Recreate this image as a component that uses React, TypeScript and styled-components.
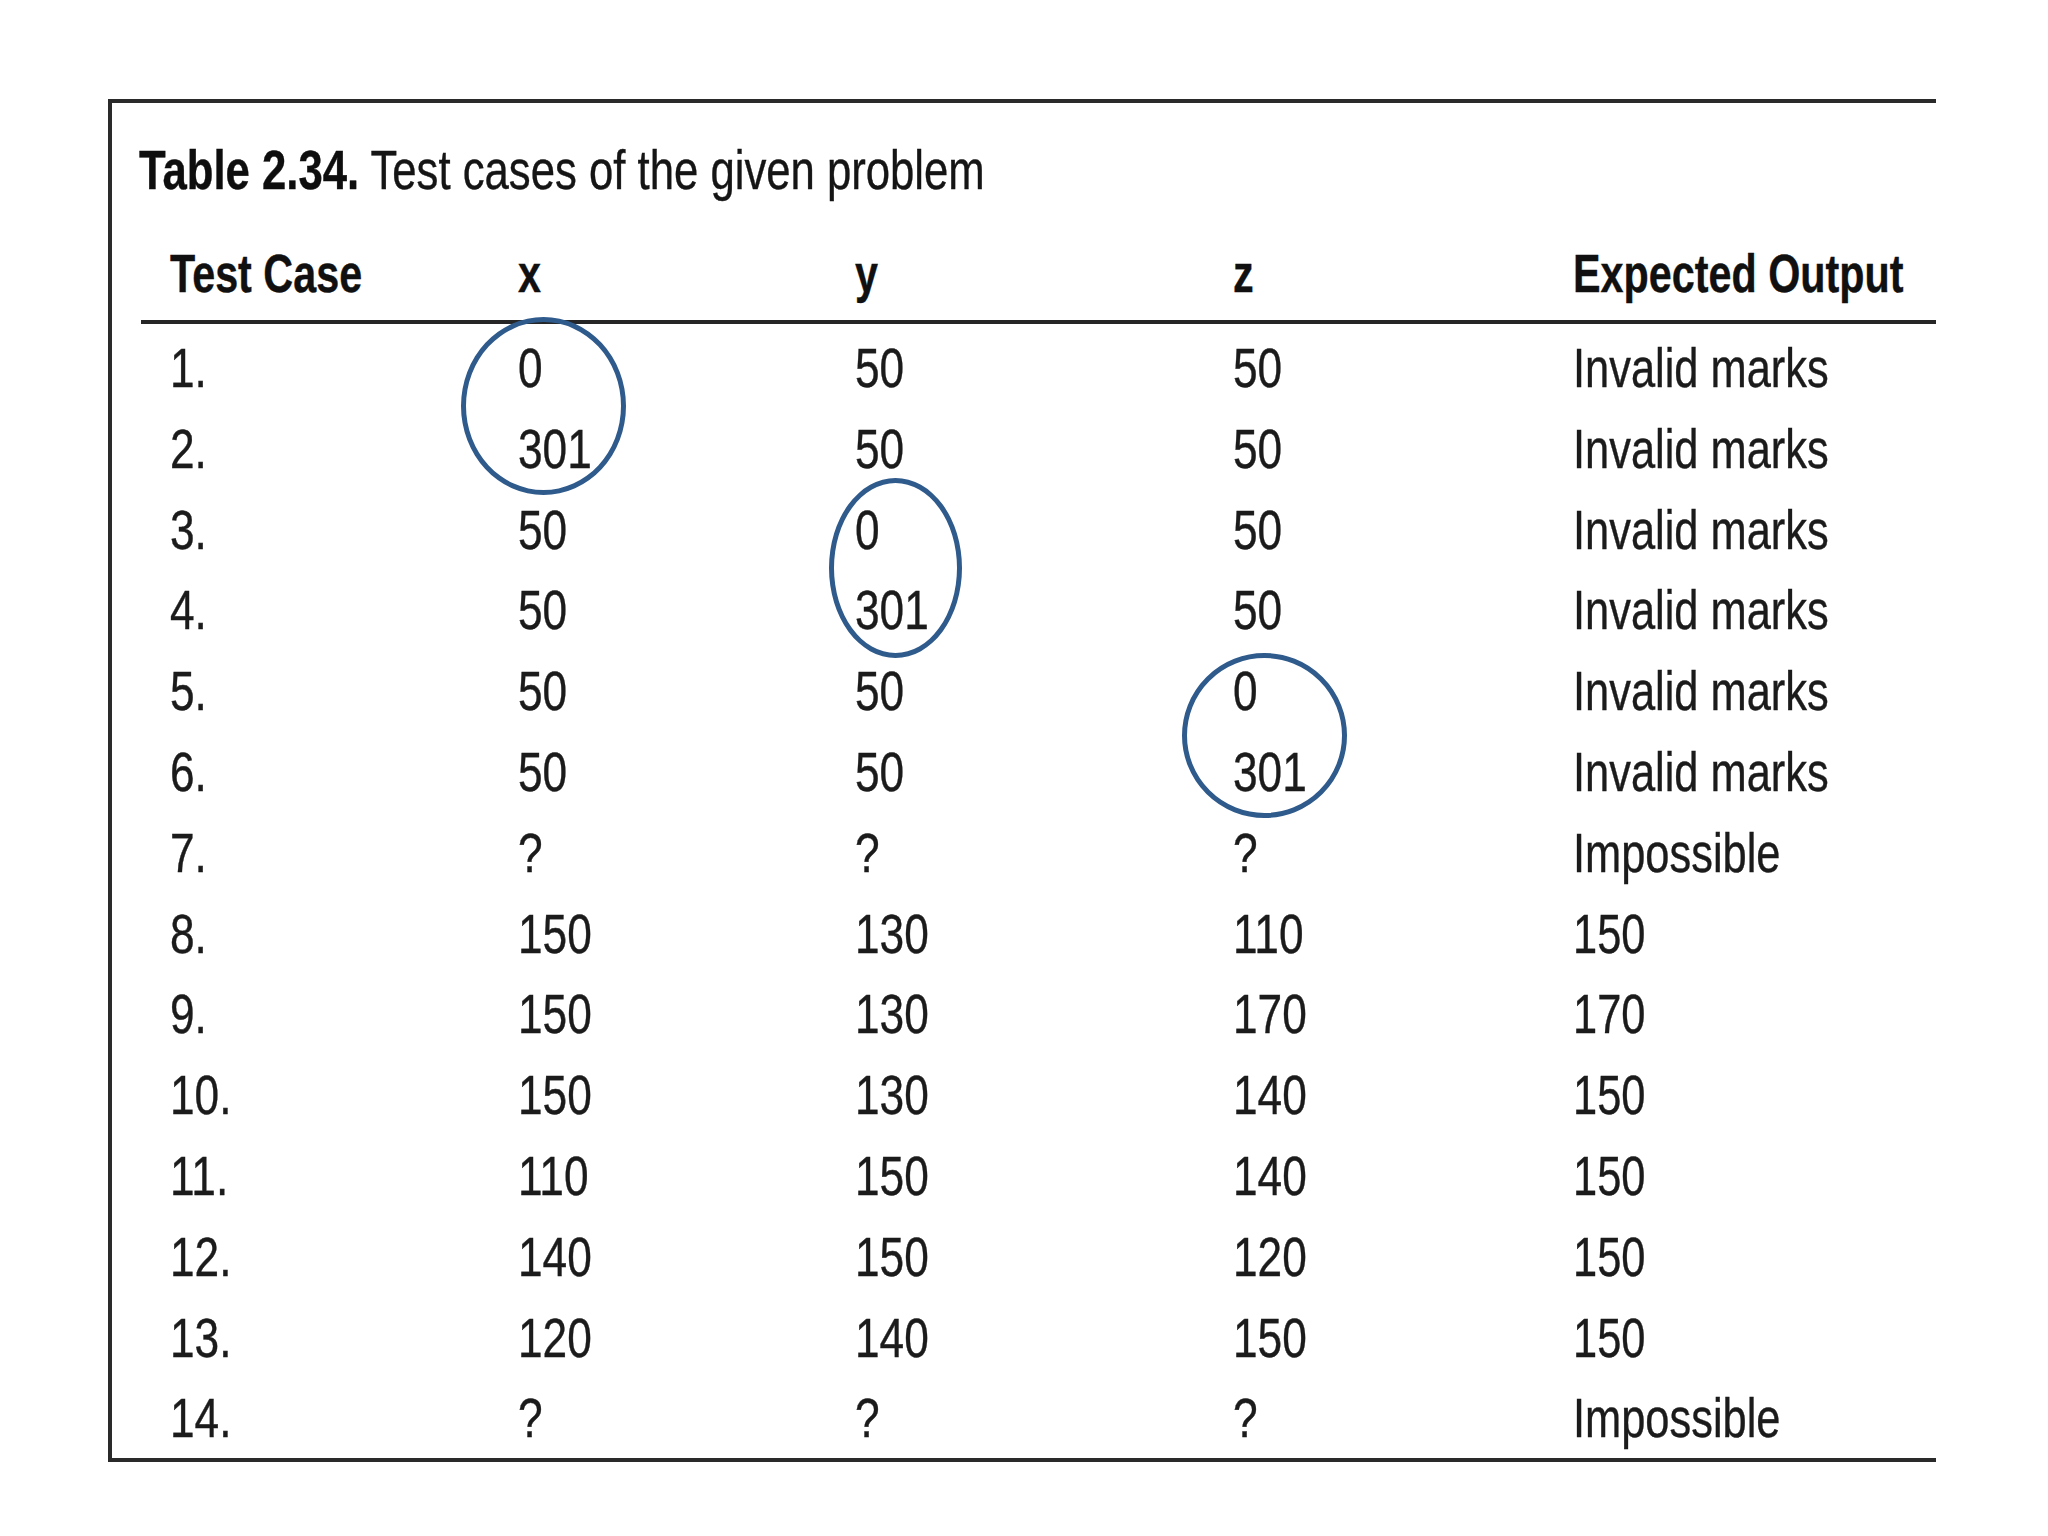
import React from "react";
import styled, { createGlobalStyle } from "styled-components";

const Global = createGlobalStyle`
  html, body { margin: 0; padding: 0; background: #ffffff; }
  body { width: 2048px; height: 1536px; overflow: hidden; }
`;

const FONT = `"Liberation Sans", Arial, sans-serif`;

const COLS = "348px 337px 378px 340px 1fr";

const Frame = styled.section`
  position: relative;
  box-sizing: border-box;
  margin: 99px 0 0 108px;
  width: 1828px;
  border-top: 4.5px solid #2a2a2a;
  border-left: 4px solid #2a2a2a;
  border-bottom: 4.5px solid #2a2a2a;
  padding: 38.6px 0 12px 0;
  font-family: ${FONT};
  color: #1b1b1b;
  -webkit-text-stroke: 0.4px currentColor;
`;

const Caption = styled.div`
  padding-left: 27px;
  font-size: 56px;
  line-height: 56px;
  white-space: nowrap;
  color: #151515;
`;

const Narrow = styled.span<{ $k: number }>`
  display: inline-block;
  transform: scaleX(${(p) => p.$k});
  transform-origin: 0 50%;
  white-space: nowrap;
`;

const CaptionLabel = styled.span`
  font-weight: 700;
  color: #0e0e0e;
`;

const Table = styled.div`
  margin: 48.7px 0 0 29px;
`;

const HeadRow = styled.div`
  display: grid;
  grid-template-columns: ${COLS};
  padding: 0 0 19.7px 29px;
  border-bottom: 4.5px solid #262626;
  font-size: 54px;
  line-height: 54px;
  font-weight: 700;
  color: #101010;
`;

const Body = styled.div`
  display: flex;
  flex-direction: column;
  gap: 24.8px;
  padding-top: 16.1px;
  font-size: 56px;
  line-height: 56px;
`;

const Row = styled.div`
  display: grid;
  grid-template-columns: ${COLS};
  padding-left: 29px;
`;

const Cell = styled.div`
  white-space: nowrap;
`;

const Ring = styled.div<{ $x: number; $y: number; $w: number; $h: number }>`
  position: absolute;
  box-sizing: border-box;
  left: ${(p) => p.$x}px;
  top: ${(p) => p.$y}px;
  width: ${(p) => p.$w}px;
  height: ${(p) => p.$h}px;
  border: 5px solid #2f5a8c;
  border-radius: 50%;
  pointer-events: none;
`;

const rows: [string, string, string, string, string][] = [
  ["1.", "0", "50", "50", "Invalid marks"],
  ["2.", "301", "50", "50", "Invalid marks"],
  ["3.", "50", "0", "50", "Invalid marks"],
  ["4.", "50", "301", "50", "Invalid marks"],
  ["5.", "50", "50", "0", "Invalid marks"],
  ["6.", "50", "50", "301", "Invalid marks"],
  ["7.", "?", "?", "?", "Impossible"],
  ["8.", "150", "130", "110", "150"],
  ["9.", "150", "130", "170", "170"],
  ["10.", "150", "130", "140", "150"],
  ["11.", "110", "150", "140", "150"],
  ["12.", "140", "150", "120", "150"],
  ["13.", "120", "140", "150", "150"],
  ["14.", "?", "?", "?", "Impossible"],
];

const heads = ["Test Case", "x", "y", "z", "Expected Output"];

const rings = [
  { x: 349, y: 214, w: 165, h: 178 },
  { x: 717, y: 375, w: 133, h: 180 },
  { x: 1070, y: 550, w: 165, h: 165 },
];

export default function App() {
  return (
    <>
      <Global />
      <Frame>
        <Caption>
          <Narrow $k={0.78}>
            <CaptionLabel>Table 2.34.</CaptionLabel> Test cases of the given problem
          </Narrow>
        </Caption>
        <Table>
          <HeadRow>
            {heads.map((h) => (
              <Cell key={h}>
                <Narrow $k={0.765}>{h}</Narrow>
              </Cell>
            ))}
          </HeadRow>
          <Body>
            {rows.map((r) => (
              <Row key={r[0]}>
                {r.map((c, i) => (
                  <Cell key={i}>
                    <Narrow $k={i === 4 ? 0.775 : 0.79}>{c}</Narrow>
                  </Cell>
                ))}
              </Row>
            ))}
          </Body>
        </Table>
        {rings.map((g, i) => (
          <Ring key={i} $x={g.x} $y={g.y} $w={g.w} $h={g.h} />
        ))}
      </Frame>
    </>
  );
}
